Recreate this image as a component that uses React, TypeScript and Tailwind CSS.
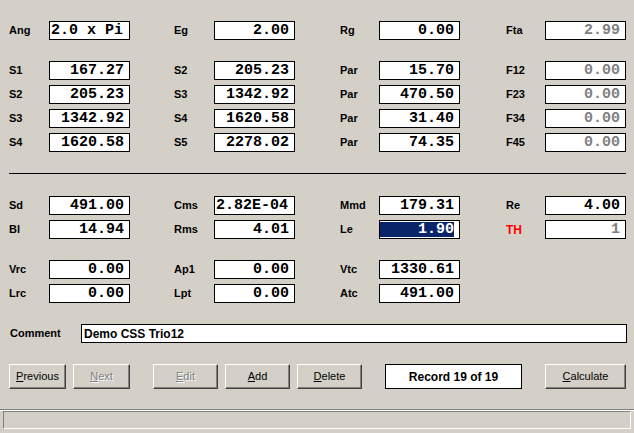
import React from 'react'

type FieldProps = {
  label: string
  value: string
  cell: string
  labelW: string
  align?: 'left' | 'right'
  disabled?: boolean
  selected?: boolean
  red?: boolean
}

const labelFont = "font-['Liberation_Sans',Arial,sans-serif] text-[11px] font-bold"
const valueFont = "font-['Liberation_Mono','Courier_New',monospace] text-[15px] font-bold leading-none"

function Field({ label, value, cell, labelW, align = 'right', disabled, selected, red }: FieldProps) {
  return (
    <div className={`flex items-center shrink-0 ${cell}`}>
      <div className={`${labelW} ${labelFont} ${red ? 'text-[#ff0000] text-[12px]' : 'text-black'}`}>{label}</div>
      <div className={`w-[81px] h-[19px] bg-white border border-black flex items-center ${align === 'left' ? 'justify-start pl-[1px]' : 'justify-end pr-[5px]'} ${selected ? 'py-[1px]' : ''}`}>
        {selected ? (
          <span className={`flex-1 h-full bg-[#0a246a] text-white flex items-center justify-end ${valueFont}`}>{value}</span>
        ) : (
          <span className={`${valueFont} ${disabled ? 'text-[#808080]' : 'text-black'}`}>{value}</span>
        )}
      </div>
    </div>
  )
}

type RowItem = Omit<FieldProps, 'cell' | 'labelW'> | null

const CELLS = ['w-[165px]', 'w-[166px]', 'w-[166px]', 'w-[120px]']
const LABELS = ['w-[40px]', 'w-[40px]', 'w-[39px]', 'w-[39px]']

function Row({ items, className = '' }: { items: RowItem[]; className?: string }) {
  return (
    <div className={`flex pl-[9px] ${className}`}>
      {items.map((it, i) =>
        it ? <Field key={i} {...it} cell={CELLS[i]} labelW={LABELS[i]} /> : <div key={i} className={CELLS[i]} />
      )}
    </div>
  )
}

function Btn({ children, disabled, w }: { children: React.ReactNode; disabled?: boolean; w: string }) {
  return (
    <button
      type="button"
      className={`${w} h-[25px] shrink-0 bg-[#d4d0c8] border border-t-white border-l-white border-r-[#404040] border-b-[#404040] shadow-[inset_-1px_-1px_0_#808080] font-['Liberation_Sans',Arial,sans-serif] text-[11px] ${disabled ? 'text-[#808080] [text-shadow:1px_1px_0_#fff]' : 'text-black'}`}
    >
      {children}
    </button>
  )
}

export default function App() {
  return (
    <div className="w-full h-[433px] bg-[#d4d0c8] overflow-hidden pt-[21px]">
      <Row items={[
        { label: 'Ang', value: '2.0 x Pi', align: 'left' },
        { label: 'Eg', value: '2.00' },
        { label: 'Rg', value: '0.00' },
        { label: 'Fta', value: '2.99', disabled: true },
      ]} />
      <div className="mt-[21px] flex flex-col gap-[5px]">
        <Row items={[
          { label: 'S1', value: '167.27' },
          { label: 'S2', value: '205.23' },
          { label: 'Par', value: '15.70' },
          { label: 'F12', value: '0.00', disabled: true },
        ]} />
        <Row items={[
          { label: 'S2', value: '205.23' },
          { label: 'S3', value: '1342.92' },
          { label: 'Par', value: '470.50' },
          { label: 'F23', value: '0.00', disabled: true },
        ]} />
        <Row items={[
          { label: 'S3', value: '1342.92' },
          { label: 'S4', value: '1620.58' },
          { label: 'Par', value: '31.40' },
          { label: 'F34', value: '0.00', disabled: true },
        ]} />
        <Row items={[
          { label: 'S4', value: '1620.58' },
          { label: 'S5', value: '2278.02' },
          { label: 'Par', value: '74.35' },
          { label: 'F45', value: '0.00', disabled: true },
        ]} />
      </div>

      <div className="mt-[21px] ml-[9px] w-[617px] h-px bg-black" />

      <div className="mt-[22px] flex flex-col gap-[5px]">
        <Row items={[
          { label: 'Sd', value: '491.00' },
          { label: 'Cms', value: '2.82E-04', align: 'left' },
          { label: 'Mmd', value: '179.31' },
          { label: 'Re', value: '4.00' },
        ]} />
        <Row items={[
          { label: 'Bl', value: '14.94' },
          { label: 'Rms', value: '4.01' },
          { label: 'Le', value: '1.90', selected: true },
          { label: 'TH', value: '1', disabled: true, red: true },
        ]} />
      </div>

      <div className="mt-[21px] flex flex-col gap-[5px]">
        <Row items={[
          { label: 'Vrc', value: '0.00' },
          { label: 'Ap1', value: '0.00' },
          { label: 'Vtc', value: '1330.61' },
          null,
        ]} />
        <Row items={[
          { label: 'Lrc', value: '0.00' },
          { label: 'Lpt', value: '0.00' },
          { label: 'Atc', value: '491.00' },
          null,
        ]} />
      </div>

      <div className="mt-[21px] flex items-center pl-[10px]">
        <div className={`w-[71px] ${labelFont} text-black`}>Comment</div>
        <div className="w-[546px] h-[19px] bg-white border border-black flex items-center pl-[2px] font-['Liberation_Sans',Arial,sans-serif] text-[12px] font-bold text-black">
          Demo CSS Trio12
        </div>
      </div>

      <div className="mt-[21px] flex items-center pl-[9px]">
        <Btn w="w-[57px]"><u>P</u>revious</Btn>
        <div className="w-[7px]" />
        <Btn w="w-[57px]" disabled><u>N</u>ext</Btn>
        <div className="w-[23px]" />
        <Btn w="w-[65px]" disabled><u>E</u>dit</Btn>
        <div className="w-[7px]" />
        <Btn w="w-[65px]"><u>A</u>dd</Btn>
        <div className="w-[7px]" />
        <Btn w="w-[65px]"><u>D</u>elete</Btn>
        <div className="w-[23px]" />
        <div className="w-[137px] h-[25px] bg-white border border-black flex items-center justify-center font-['Liberation_Sans',Arial,sans-serif] text-[12px] font-bold text-black">
          Record 19 of 19
        </div>
        <div className="w-[23px]" />
        <Btn w="w-[81px]"><u>C</u>alculate</Btn>
      </div>

      <div className="mt-[20px] border-t border-[#808080]" />
      <div className="border-t border-white" />
      <div className="mx-[3px] h-[18px] border border-t-[#808080] border-l-[#808080] border-r-white border-b-white" />
    </div>
  )
}
